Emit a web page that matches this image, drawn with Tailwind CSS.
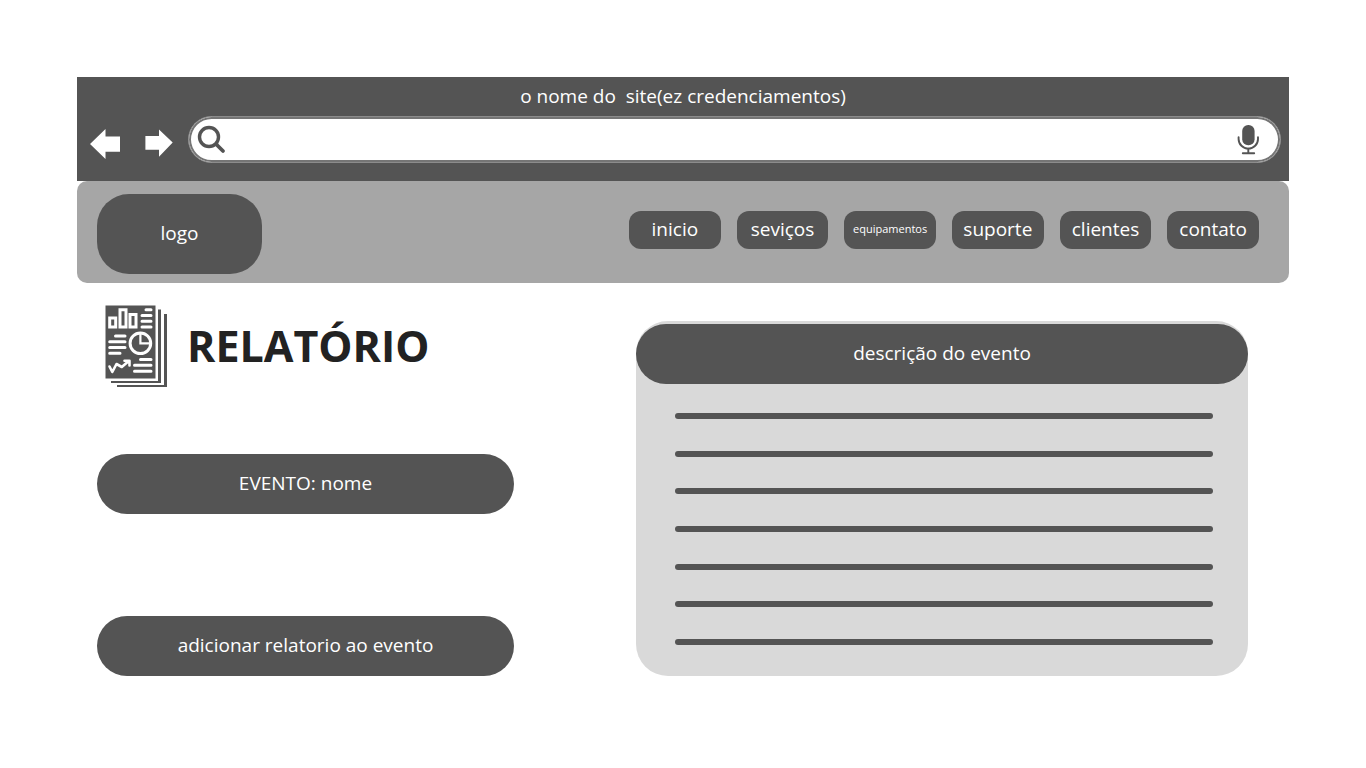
<!DOCTYPE html>
<html lang="pt-BR">
<head>
<meta charset="utf-8">
<meta name="viewport" content="width=device-width, initial-scale=1">
<title>ez credenciamentos - Relatório</title>
<script src="https://cdn.jsdelivr.net/npm/@tailwindcss/browser@4"></script>
</head>
<body class="bg-white p-[77px] font-['Open_Sans',sans-serif] text-[19px] leading-6 text-white">
  <header class="flex flex-col bg-[#545454] pt-[7px] pb-[18px]">
    <p class="mb-2 self-center whitespace-pre">o nome do  site(ez credenciamentos)</p>
    <div class="flex items-center pr-2 pl-[13px]">
      <button type="button" aria-label="Voltar" class="mt-2">
        <svg class="h-[30px] w-[30px]" viewBox="0 0 30 30" fill="#fff"><path d="M0 15 15.5 0v7.5H30v15.3H15.5V30Z"/></svg>
      </button>
      <button type="button" aria-label="Avançar" class="mt-2 ml-[25px]">
        <svg class="h-[30px] w-[28px]" viewBox="0 0 28 30" fill="#fff"><path d="M.4 7H14V.5L27.7 13.6 14 27.8v-7H.4Z"/></svg>
      </button>
      <form role="search" class="ml-[15px] flex h-[47px] flex-1 items-center rounded-full border border-[#8c8c8c] bg-white pr-[21px] pl-[7px] inset-ring-2 inset-ring-[#757575]">
        <label for="q" aria-label="Pesquisar">
          <svg class="h-[30px] w-[30px]" viewBox="0 0 30 30" fill="none" stroke="#545454" stroke-width="3.4" stroke-linecap="round"><circle cx="13" cy="12" r="9.500"/><path stroke-width="3.800" d="m20.500 19.500 6.500 6.500"/></svg>
        </label>
        <input id="q" type="search" class="mx-2 h-9 min-w-0 flex-1 bg-transparent text-[#545454] outline-none">
        <button type="button" aria-label="Pesquisa por voz">
          <svg class="h-[30px] w-[22px]" viewBox="0 0 22 30" fill="none" stroke="#545454" stroke-width="1.9" stroke-linecap="round"><rect x="5.200" y="0" width="12.400" height="20.300" rx="6" fill="#545454" stroke="none"/><path d="M1.600 12.300v1.600a9.700 9.700 0 0 0 19.400 0v-1.600M11.300 23.500v4.600M5.800 28.300h11.400"/></svg>
        </button>
      </form>
    </div>
  </header>

  <nav class="flex h-[102px] items-center justify-between rounded-[10px] bg-[#a6a6a6] pr-[30px] pl-5">
    <a href="#" class="mt-1 flex h-20 w-[165px] items-center justify-center rounded-[32px] bg-[#545454] pb-0.5">logo</a>
    <div class="mb-1 grid w-[630px] grid-cols-6 gap-4 text-center">
      <a href="#" class="flex h-[38px] items-center justify-center rounded-xl bg-[#545454] pb-0.5">inicio</a>
      <a href="#" class="flex h-[38px] items-center justify-center rounded-xl bg-[#545454] pb-0.5">seviços</a>
      <a href="#" class="flex h-[38px] items-center justify-center rounded-xl bg-[#545454] pb-0.5 text-[11px]">equipamentos</a>
      <a href="#" class="flex h-[38px] items-center justify-center rounded-xl bg-[#545454] pb-0.5">suporte</a>
      <a href="#" class="flex h-[38px] items-center justify-center rounded-xl bg-[#545454] pb-0.5">clientes</a>
      <a href="#" class="flex h-[38px] items-center justify-center rounded-xl bg-[#545454] pb-0.5">contato</a>
    </div>
  </nav>

  <main class="grid grid-cols-[417fr_612fr] gap-x-[122px] pt-[22px] pr-[41px] pl-5">
    <section class="flex flex-col">
      <div class="flex items-center pl-2">
        <svg class="h-[82px] w-[62px]" viewBox="0 0 62 82" fill="none" stroke="#fff" stroke-width="3" stroke-linecap="round">
          <path fill="#545454" stroke="none" d="M.5 .5H50.500v73H.5ZM53 4.500h3v73.500H6v-2h47ZM59 9h3v73H12v-2h47Z"/>
          <path d="M4.700 13h6v9h-6ZM15 4.700h6v17.300h-6ZM25 9.500h6V22h-6Z"/>
          <path d="M41 4.700h5M37 10.400h9M37 16.200h9M37 22h9M10.500 31H20M4.700 36.800H20M4.700 42.600H20M4.700 48.300H15M35.500 54.400H46M29.500 60.300H46M29.500 66.200H46"/>
          <circle cx="35.400" cy="38.300" r="10.300"/>
          <path stroke-width="2.200" d="M35.400 29v9.300H45"/>
          <path stroke-linejoin="round" stroke-width="2.600" d="M4.500 61.500 7.300 67 11.500 59l5.300 3 6.700-5.800M19.500 55.700h5v4.800"/>
        </svg>
        <h1 class="ml-5 text-[43px] leading-[60px] font-bold text-[#222]">RELATÓRIO</h1>
      </div>
      <button type="button" class="mt-[67px] h-[60px] rounded-full bg-[#545454] pb-0.5">EVENTO: nome</button>
      <button type="button" class="mt-auto h-[60px] rounded-full bg-[#545454] pb-0.5">adicionar relatorio ao evento</button>
    </section>

    <section class="mt-4 flex h-[355px] flex-col rounded-[32px] bg-[#d9d9d9] pt-[3px] pb-[31px]">
      <h2 class="flex h-[60px] items-center justify-center rounded-full bg-[#545454] pb-0.5">descrição do evento</h2>
      <div class="mt-[29px] mr-[35px] ml-[39px] flex flex-1 flex-col justify-between">
        <hr class="h-1.5 rounded-full border-0 bg-[#545454]">
        <hr class="h-1.5 rounded-full border-0 bg-[#545454]">
        <hr class="h-1.5 rounded-full border-0 bg-[#545454]">
        <hr class="h-1.5 rounded-full border-0 bg-[#545454]">
        <hr class="h-1.5 rounded-full border-0 bg-[#545454]">
        <hr class="h-1.5 rounded-full border-0 bg-[#545454]">
        <hr class="h-1.5 rounded-full border-0 bg-[#545454]">
      </div>
    </section>
  </main>
</body>
</html>
